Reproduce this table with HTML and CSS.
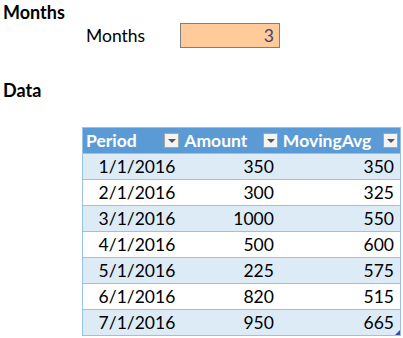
FILE: index.html
```html
<!DOCTYPE html>
<html>
<head>
<meta charset="utf-8">
<link rel="stylesheet" href="styles.css">
</head>
<body>
<div class="sheet">
  <div class="title">Months</div>
  <div class="param">
    <span class="label">Months</span>
    <span class="input">3</span>
  </div>
  <div class="title data-title">Data</div>
  <table class="tbl">
    <thead>
      <tr>
        <th class="c1"><span>Period</span><i class="dd"></i></th>
        <th class="c2"><span>Amount</span><i class="dd"></i></th>
        <th class="c3"><span>MovingAvg</span><i class="dd"></i></th>
      </tr>
    </thead>
    <tbody>
      <tr><td>1/1/2016</td><td>350</td><td>350</td></tr>
      <tr><td>2/1/2016</td><td>300</td><td>325</td></tr>
      <tr><td>3/1/2016</td><td>1000</td><td>550</td></tr>
      <tr><td>4/1/2016</td><td>500</td><td>600</td></tr>
      <tr><td>5/1/2016</td><td>225</td><td>575</td></tr>
      <tr><td>6/1/2016</td><td>820</td><td>515</td></tr>
      <tr><td>7/1/2016</td><td>950</td><td class="corner">665</td></tr>
    </tbody>
  </table>
</div>
</body>
</html>
```
FILE: styles.css
```css
html, body {
  margin: 0;
  padding: 0;
  background: #fff;
}
.sheet {
  font-family: Lato, "Open Sans", sans-serif;
  font-size: 17.5px;
  color: #000;
  width: 403px;
  height: 338px;
  overflow: hidden;
}
.title {
  font-weight: bold;
  font-size: 18px;
  height: 24px;
  line-height: 24px;
  padding-left: 3px;
}
.param {
  display: flex;
  align-items: center;
  height: 25px;
  margin-top: -1px;
}
.label {
  width: 180px;
  padding-left: 86px;
  box-sizing: border-box;
}
.input {
  width: 100px;
  height: 25px;
  box-sizing: border-box;
  border: 1px solid #7f7f7f;
  background: #ffcc99;
  color: #3f3f76;
  text-align: right;
  padding-right: 5px;
  line-height: 23px;
}
.data-title {
  margin-top: 30px;
}
.tbl {
  margin-top: 25px;
  margin-left: 82px;
  border-collapse: collapse;
  width: 319px;
  border: 1px solid #9bc2e6;
}
.tbl th, .tbl td {
  box-sizing: border-box;
}
.tbl th {
  position: relative;
  background: #5b9bd5;
  color: #fff;
  font-weight: bold;
  text-align: left;
  border: none;
  padding: 0 3px 0 3px;
  height: 26px;
}
.c1 { width: 99px; }
.c2 { width: 99px; }
.c3 { width: 121px; }
.dd {
  position: absolute;
  right: 2px;
  top: 5px;
  width: 15px;
  height: 15px;
  box-sizing: border-box;
  background: #f3f3f3;
  border: 1px solid #a6a6a6;
}
.dd::after {
  content: "";
  position: absolute;
  left: 3px;
  top: 5px;
  border-left: 4px solid transparent;
  border-right: 4px solid transparent;
  border-top: 4px solid #555;
}
.tbl td {
  text-align: right;
  border-top: 1px solid #9bc2e6;
  height: 26px;
  padding: 0 6px 0 4px;
}
.tbl tbody tr:nth-child(odd) td {
  background: #ddebf7;
}
.corner {
  position: relative;
}
.corner::after {
  content: "";
  position: absolute;
  right: 0;
  bottom: 0;
  width: 0;
  height: 0;
  border-left: 5px solid transparent;
  border-bottom: 5px solid #3b4ba8;
}
```
